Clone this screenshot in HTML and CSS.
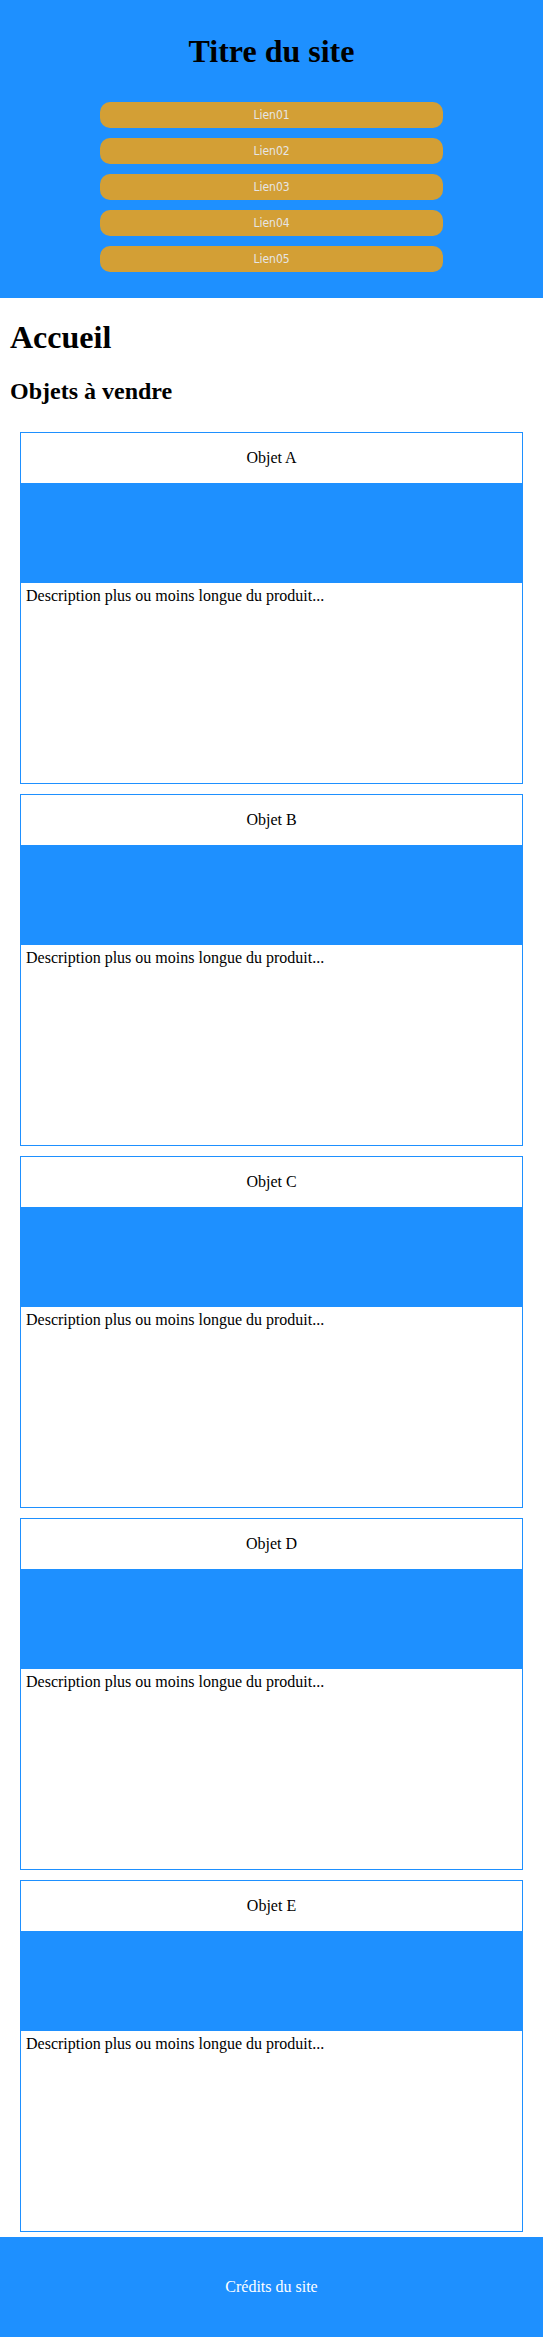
FILE: index.html
```html
<!DOCTYPE html>
<html lang="fr">
<head>
<meta charset="utf-8">
<title>Titre du site</title>
<link rel="stylesheet" href="styles.css">
</head>
<body>
<header class="site-header">
  <h1 class="site-title">Titre du site</h1>
  <nav class="nav">
    <a class="nav-link" href="#">Lien01</a>
    <a class="nav-link" href="#">Lien02</a>
    <a class="nav-link" href="#">Lien03</a>
    <a class="nav-link" href="#">Lien04</a>
    <a class="nav-link" href="#">Lien05</a>
  </nav>
</header>
<main class="main">
  <h1 class="page-title">Accueil</h1>
  <h2 class="section-title">Objets à vendre</h2>
  <div class="cards">
    <article class="card">
      <div class="card-title">Objet A</div>
      <div class="card-image"></div>
      <div class="card-desc">Description plus ou moins longue du produit...</div>
    </article>
    <article class="card">
      <div class="card-title">Objet B</div>
      <div class="card-image"></div>
      <div class="card-desc">Description plus ou moins longue du produit...</div>
    </article>
    <article class="card">
      <div class="card-title">Objet C</div>
      <div class="card-image"></div>
      <div class="card-desc">Description plus ou moins longue du produit...</div>
    </article>
    <article class="card">
      <div class="card-title">Objet D</div>
      <div class="card-image"></div>
      <div class="card-desc">Description plus ou moins longue du produit...</div>
    </article>
    <article class="card">
      <div class="card-title">Objet E</div>
      <div class="card-image"></div>
      <div class="card-desc">Description plus ou moins longue du produit...</div>
    </article>
  </div>
</main>
<footer class="site-footer">Crédits du site</footer>
</body>
</html>
```

FILE: styles.css
```css
html, body {
  margin: 0;
  padding: 0;
}

body {
  font-family: "Liberation Serif", "Times New Roman", serif;
  font-size: 16px;
  color: #000;
  background: #fff;
}

.site-header {
  background: #1e90ff;
  padding: 33px 0 26px;
}

.site-title {
  margin: 0 0 32px;
  font-size: 32px;
  font-weight: bold;
  text-align: center;
}

.nav {
  display: flex;
  flex-direction: column;
  gap: 10px;
  padding: 0 100px;
}

.nav-link {
  display: flex;
  align-items: center;
  justify-content: center;
  height: 26px;
  border-radius: 10px;
  background: #d39f35;
  color: #e6e6e6;
  text-decoration: none;
  font-family: "DejaVu Sans Condensed", "DejaVu Sans", sans-serif;
  font-stretch: condensed;
  font-size: 12px;
}

.main {
  padding: 0 10px;
}

.page-title {
  margin: 21.44px 0;
  font-size: 32px;
}

.section-title {
  margin: 0;
  font-size: 24px;
}

.cards {
  display: flex;
  flex-direction: column;
  gap: 10px;
  padding: 27px 10px 5px;
}

.card {
  border: 1px solid #1e90ff;
  display: flex;
  flex-direction: column;
}

.card-title {
  height: 50px;
  display: flex;
  align-items: center;
  justify-content: center;
}

.card-image {
  height: 100px;
  background: #1e90ff;
}

.card-desc {
  height: 200px;
  box-sizing: border-box;
  padding: 4px 5px;
}

.site-footer {
  height: 100px;
  background: #1e90ff;
  color: #fff;
  display: flex;
  align-items: center;
  justify-content: center;
}
```
